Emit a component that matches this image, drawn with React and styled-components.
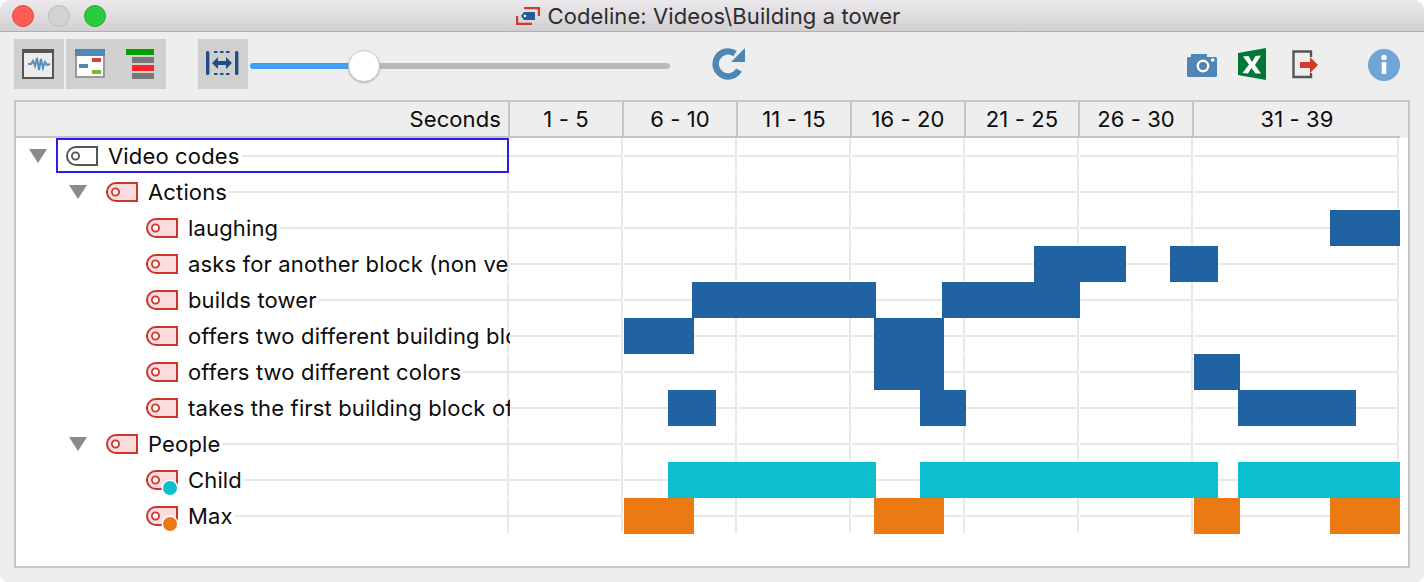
import React from "react";
import styled, { createGlobalStyle } from "styled-components";

const Global = createGlobalStyle`
  html, body { margin: 0; padding: 0; background: #fff; }
  body { font-family: "Inter", "Liberation Sans", sans-serif; color: #0c0c0c; }
`;

const Win = styled.div`
  width: 1424px; height: 582px; background: #eeeeee; overflow: hidden;
  border-radius: 10px 10px 8px 8px; display: flex; flex-direction: column;
`;
const TitleBar = styled.div`
  height: 31px; flex: none; display: grid; grid-template-columns: 1fr auto 1fr; align-items: center;
  background: linear-gradient(#ebe9eb, #d2d0d2); border-bottom: 1px solid #b1afb1; padding: 0 0 0 12px;
`;
const Lights = styled.div`display: flex; gap: 14px;`;
const Light = styled.span`
  width: 22px; height: 22px; box-sizing: border-box; border-radius: 50%; border: 1px solid ${p => p.$b}; background: ${p => p.$c};
`;
const Title = styled.div`
  display: flex; align-items: center; gap: 8px; font-size: 22px; color: #2e2b2e; margin-right: 20px;
  letter-spacing: 0.1px; white-space: nowrap;
`;
const Toolbar = styled.div`
  height: 68px; flex: none; box-sizing: border-box; padding: 7px 24px 0 14px; display: flex; align-items: flex-start;
`;
const ToolBtn = styled.div`
  width: 50px; height: 50px; background: #d0d0d0; flex: none; margin-right: ${p => p.$mr || 0}px;
  svg { display: block; }
`;
const BtnGroup = styled.div`display: flex; margin-right: ${p => p.$mr || 0}px;`;
const Slider = styled.div`
  width: 420px; height: 50px; flex: none; position: relative; display: flex; align-items: center; padding-top: 4px; box-sizing: border-box;
`;
const SliderTrack = styled.div`
  flex: 1; height: 6px; border-radius: 3px;
  background: linear-gradient(to right, #3f9ff5 0, #3f9ff5 114px, #b9b9b9 114px);
`;
const Knob = styled.div`
  position: absolute; left: 98px; top: 11px; width: 32px; height: 32px; border-radius: 50%;
  background: #fff; border: 1px solid #c9c9c9; box-sizing: border-box; box-shadow: 0 1px 2px rgba(0,0,0,.25);
`;
const IconSlot = styled.svg`
  display: block; flex: none; margin-left: ${p => p.$ml || 0}px;
`;
const Spacer = styled.div`flex: 1;`;

const Panel = styled.div`
  margin: 0 14px; height: 468px; box-sizing: border-box; border: 2px solid #c8c8c8; background: #fff;
  display: flex; flex-direction: column;
`;
const Header = styled.div`display: flex; height: 36px; flex: none; background: #eeeeee;`;
const HeadCells = styled.div`display: flex; width: 1384px; flex: none; border-bottom: 2px solid #c4c4c4; box-sizing: border-box;`;
const HeadCell = styled.div`
  width: ${p => p.$w}px; flex: none; box-sizing: border-box; border-right: ${p => (p.$last ? "0" : "2px solid #c4c4c4")};
  display: flex; align-items: center; justify-content: ${p => (p.$right ? "flex-end" : "center")};
  padding-right: ${p => (p.$right ? 7 : 0)}px; font-size: 22px; letter-spacing: 0.1px;
`;
const Rows = styled.div`display: flex; flex-direction: column;`;
const Row = styled.div`display: flex; height: 36px; width: 1392px;`;
const Label = styled.div`
  width: 494px; flex: none; display: flex; align-items: center; overflow: hidden; position: relative;
  &::before { content: ""; position: absolute; right: 1px; top: 0; bottom: 1px; width: 2px; background: #e8e8e8; }
  ${p => p.$focus && `&::after { content: ""; position: absolute; left: 40px; top: 0; right: 1px; height: 35px; box-sizing: border-box; border: 2px solid #2a1cf0; }`}
`;
const Indent = styled.div`width: ${p => 13 + 40 * p.$level}px; flex: none;`;
const TriSlot = styled.div`width: 18px; margin-right: 19px; flex: none; display: flex; svg { display: block; }`;
const Text = styled.span`
  flex: none; font-size: 22px; margin-left: 10px; letter-spacing: 0.15px; white-space: nowrap; position: relative; z-index: 1;
`;
const HLine = styled.div`flex: 1; height: 2px; background: #e8e8e8; margin-left: 2px; min-width: 0;`;
const Chart = styled.div`display: flex; position: relative; flex: none; width: 890px;`;
const Cell = styled.div`
  width: ${p => p.$w}px; flex: none; position: relative; box-sizing: border-box;
  &::before { content: ""; position: absolute; right: 1px; top: 0; bottom: 1px; width: 2px; background: #e8e8e8; }
  &::after { content: ""; position: absolute; left: 0; right: 1px; top: 17px; height: 2px; background: #e8e8e8; }
`;
const Bar = styled.div`position: absolute; top: 0; height: 36px; background: ${p => p.$c}; z-index: 2;`;
const TagWrap = styled.div`flex: none; width: 32px; height: 20px; position: relative; svg { display: block; }`;

const Tag = ({ gray, dot }) => (
  <TagWrap>
    <svg width="34" height="30" viewBox="0 0 34 30" style={{ overflow: "visible" }}>
      <path d="M10 1H31V19H10A9 9 0 0 1 10 1Z" fill={gray ? "#fff" : "#fbdcdc"} stroke={gray ? "#555" : "#c9352a"} strokeWidth="2" />
      <circle cx="9.500" cy="10" r="3.600" fill="#fff" stroke={gray ? "#555" : "#c9352a"} strokeWidth="1.800" />
      {dot && <circle cx="24" cy="18" r="8.500" fill="#fff" />}
      {dot && <circle cx="24" cy="18" r="7" fill={dot} />}
    </svg>
  </TagWrap>
);

const Tri = () => (
  <svg width="18" height="14" viewBox="0 0 18 14"><path d="M0 0H18L9 14Z" fill="#8b8b8b" /></svg>
);

const BLUE = "#2163a2", CYAN = "#0bbfce", ORANGE = "#ec7a14";
const rows = [
  { t: "Video codes", level: 0, branch: 1, gray: 1, focus: 1, bars: [] },
  { t: "Actions", level: 1, branch: 1, bars: [] },
  { t: "laughing", level: 2, c: BLUE, bars: [[1330, 1400]] },
  { t: "asks for another block (non verbal)", level: 2, c: BLUE, bars: [[1034, 1126], [1170, 1218]] },
  { t: "builds tower", level: 2, c: BLUE, bars: [[692, 876], [942, 1080]] },
  { t: "offers two different building blocks", level: 2, c: BLUE, bars: [[624, 694], [874, 944]] },
  { t: "offers two different colors", level: 2, c: BLUE, bars: [[874, 944], [1194, 1240]] },
  { t: "takes the first building block offered", level: 2, c: BLUE, bars: [[668, 716], [920, 966], [1238, 1356]] },
  { t: "People", level: 1, branch: 1, bars: [] },
  { t: "Child", level: 2, c: CYAN, dot: CYAN, bars: [[668, 876], [920, 1218], [1238, 1400]] },
  { t: "Max", level: 2, c: ORANGE, dot: ORANGE, bars: [[624, 694], [874, 944], [1194, 1240], [1330, 1400]] },
];
const heads = [["1 - 5", 114], ["6 - 10", 114], ["11 - 15", 114], ["16 - 20", 114], ["21 - 25", 114], ["26 - 30", 114], ["31 - 39", 206]];
const cellW = [114, 114, 114, 114, 114, 114, 206];

export default function App() {
  return (
    <Win>
      <Global />
      <TitleBar>
        <Lights>
          <Light $c="#fc5d57" $b="#e5433e" />
          <Light $c="#d3d2d3" $b="#bdbcbd" />
          <Light $c="#29c940" $b="#20ad33" />
        </Lights>
        <Title>
          <svg width="24" height="18" viewBox="0 0 24 18">
            <path d="M8 1H23V9" fill="none" stroke="#d3382c" strokeWidth="2.400" />
            <path d="M1 9V17H16" fill="none" stroke="#d3382c" strokeWidth="2.400" />
            <path d="M8 5H19V13H8L5 9Z" fill="#1f5f95" />
            <circle cx="9" cy="9" r="1.300" fill="#fff" />
          </svg>
          Codeline: Videos\Building a tower
        </Title>
        <span />
      </TitleBar>
      <Toolbar>
        <ToolBtn $mr={2}>
          <svg width="50" height="50" viewBox="14 39 50 50">
            <rect x="23" y="50.500" width="30" height="27.500" fill="#ececec" stroke="#555" strokeWidth="2" />
            <rect x="22" y="49" width="32" height="4" fill="#555" />
            <path d="M28 64L31 64L33 61L35 66L37 58L39 70L41 59L43 68L45 62L47 65L50 64" fill="none" stroke="#5a8fbb" strokeWidth="2" />
          </svg>
        </ToolBtn>
        <BtnGroup $mr={32}>
          <ToolBtn>
            <svg width="50" height="50" viewBox="66 39 50 50">
              <rect x="76" y="50" width="28" height="27" fill="#fff" stroke="#999" strokeWidth="2" />
              <rect x="75" y="49" width="30" height="7" fill="#5286b3" />
              <rect x="92" y="58" width="9" height="4" fill="#dd4034" />
              <rect x="79" y="64" width="9" height="4" fill="#5286b3" />
              <rect x="92" y="70" width="9" height="4" fill="#7eb82c" />
            </svg>
          </ToolBtn>
          <ToolBtn>
            <svg width="50" height="50" viewBox="116 39 50 50">
              <rect x="126" y="49" width="28" height="6" fill="#00a000" />
              <rect x="132" y="57" width="22" height="6" fill="#777" />
              <rect x="132" y="65" width="22" height="6" fill="#ff2222" />
              <rect x="132" y="73" width="22" height="6" fill="#777" />
            </svg>
          </ToolBtn>
        </BtnGroup>
        <ToolBtn $mr={2}>
          <svg width="50" height="50" viewBox="198 39 50 50">
            <rect x="206" y="51" width="3.400" height="24" rx="1.500" fill="#1f4f85" />
            <rect x="235" y="51" width="3.400" height="24" rx="1.500" fill="#1f4f85" />
            <path d="M214 52H232M214 74H232" stroke="#1f4f85" strokeWidth="2" strokeDasharray="3.500 2.500" />
            <path d="M212 63L218 57V61H226V57L232 63L226 69V65H218V69Z" fill="#1f4f85" />
          </svg>
        </ToolBtn>
        <Slider>
          <SliderTrack />
          <Knob />
        </Slider>
        <IconSlot $ml={42} width="34" height="50" viewBox="711 39 34 50">
          <path d="M734 53.500A12.500 12.500 0 1 0 738 70" fill="none" stroke="#4e87b4" strokeWidth="6.400" />
          <path d="M744 48V62H730Z" fill="#4e87b4" />
        </IconSlot>
        <Spacer />
        <IconSlot width="30" height="50" viewBox="1187 39 30 50">
          <path d="M1188.500 57H1191V54H1207V57H1215.500A1.500 1.500 0 0 1 1217 58.500V75.500A1.500 1.500 0 0 1 1215.500 77H1188.500A1.500 1.500 0 0 1 1187 75.500V58.500A1.500 1.500 0 0 1 1188.500 57Z" fill="#4f86b3" />
          <circle cx="1203" cy="66" r="5.200" fill="none" stroke="#fff" strokeWidth="2.400" />
          <circle cx="1212.700" cy="60" r="1.800" fill="#fff" />
        </IconSlot>
        <IconSlot $ml={21} width="28" height="50" viewBox="1238 39 28 50">
          <path d="M1238 53L1266 48V80L1238 75Z" fill="#00783a" />
          <path d="M1243 56.500L1248.500 56L1252 62L1255.500 56L1261 55.500L1255 65L1261 73.500L1255.500 73.500L1251.500 68L1248 73.500L1242.500 73L1249 64.500Z" fill="#fff" />
        </IconSlot>
        <IconSlot $ml={26} width="26" height="50" viewBox="1292 39 26 50">
          <path d="M1311 57V51.500H1293.500V77H1311V73" fill="none" stroke="#555" strokeWidth="2.400" />
          <path d="M1300 62H1310V57L1318 65L1310 73V68H1300Z" fill="#d33a2b" />
        </IconSlot>
        <IconSlot $ml={50} width="32" height="50" viewBox="1368 39 32 50">
          <circle cx="1384" cy="65" r="16" fill="#6fa6d6" />
          <rect x="1381.700" y="62" width="4.600" height="12" fill="#fff" />
          <circle cx="1384" cy="57.500" r="2.800" fill="#fff" />
        </IconSlot>
      </Toolbar>
      <Panel>
        <Header>
          <HeadCells>
            <HeadCell $w={494} $right>Seconds</HeadCell>
            {heads.map(([t, w], i) => (
              <HeadCell key={t} $w={w} $last={i === heads.length - 1}>{t}</HeadCell>
            ))}
          </HeadCells>
        </Header>
        <Rows>
          {rows.map(r => (
            <Row key={r.t}>
              <Label $focus={r.focus}>
                <Indent $level={r.level} />
                <TriSlot>{r.branch && <Tri />}</TriSlot>
                <Tag gray={r.gray} dot={r.dot} />
                <Text>{r.t}</Text>
                <HLine />
              </Label>
              <Chart>
                {cellW.map((w, i) => <Cell key={i} $w={w} />)}
                {r.bars.map(([a, b]) => (
                  <Bar key={a} $c={r.c} style={{ left: a - 510, width: b - a }} />
                ))}
              </Chart>
            </Row>
          ))}
        </Rows>
      </Panel>
    </Win>
  );
}
